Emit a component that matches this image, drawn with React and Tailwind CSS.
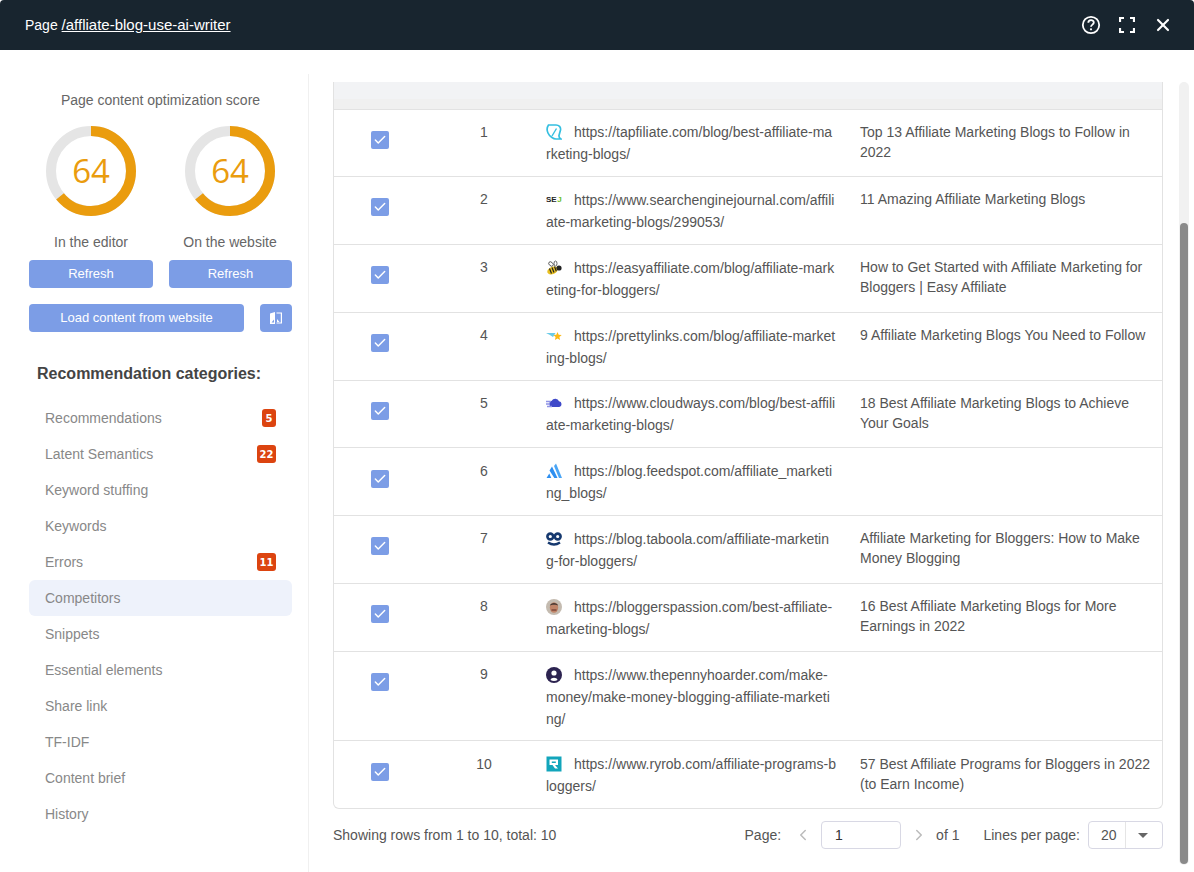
import { Check, ChevronLeft, ChevronRight, X } from 'lucide-react';

const FONT = "font-['Liberation_Sans',Arial,sans-serif]";

const categories = [
  { name: 'Recommendations', badge: 5 },
  { name: 'Latent Semantics', badge: 22 },
  { name: 'Keyword stuffing' },
  { name: 'Keywords' },
  { name: 'Errors', badge: 11 },
  { name: 'Competitors', active: true },
  { name: 'Snippets' },
  { name: 'Essential elements' },
  { name: 'Share link' },
  { name: 'TF-IDF' },
  { name: 'Content brief' },
  { name: 'History' },
];

function TapIcon() {
  return (
    <svg viewBox="0 0 16 16" className="h-4 w-4">
      <path d="M2.500 1h7.500c3 0 5 2 4.500 5L13 11.500c-.2 1.300.5 2.500 1.800 3.500H10C7.500 15 3.500 12.500 2 9 .8 6.500.8 3.500 2.500 1z" fill="none" stroke="#35bfe0" strokeWidth="1.700" />
      <path d="M6 12l4.500-7.500" stroke="#35bfe0" strokeWidth="1.400" />
    </svg>
  );
}

function SejIcon() {
  return (
    <span className="flex h-4 w-4 items-center text-[8px] leading-none font-bold text-[#222]">
      <span>SE</span>
      <span className="ml-[0.5px] text-[#6fbf2a]">J</span>
    </span>
  );
}

function BeeIcon() {
  return (
    <svg viewBox="0 0 16 16" className="h-4 w-4">
      <ellipse cx="5" cy="4" rx="2.600" ry="1.800" fill="none" stroke="#555" strokeWidth="0.900" transform="rotate(40 5 4)" />
      <ellipse cx="9.500" cy="3.500" rx="1.500" ry="2.500" fill="none" stroke="#555" strokeWidth="0.900" />
      <ellipse cx="6.500" cy="10.500" rx="5.500" ry="3.600" fill="#e9c021" transform="rotate(-25 6.500 10.500)" />
      <path d="M3.500 8.500l2 5M6 7.500l2 5M8.500 6.500l1.800 4.800" stroke="#222" strokeWidth="1.200" />
      <circle cx="13" cy="8" r="2.600" fill="#222" />
    </svg>
  );
}

function PrettyIcon() {
  return (
    <svg viewBox="0 0 16 16" className="h-4 w-4">
      <path d="M0 5h9.500L7 9 3.500 6.800z" fill="#69cbe8" />
      <path d="M11.500 4l1.200 2.800 3 .2-2.300 2 .7 3-2.600-1.600L8.900 12l.7-3-2.300-2 3-.2z" fill="#fbb917" />
    </svg>
  );
}

function CloudIcon() {
  return (
    <svg viewBox="0 0 16 16" className="h-4 w-4">
      <path d="M5.500 12a3.200 3.200 0 0 1 .2-6.200A4 4 0 0 1 13 6.300a2.900 2.900 0 0 1 .3 5.700z" fill="#3f49c9" />
      <path d="M0 6.500h5M0 9h4M1 11.500h5" stroke="#8f93e6" strokeWidth="1.300" />
    </svg>
  );
}

function FeedIcon() {
  return (
    <svg viewBox="0 0 16 16" className="h-4 w-4">
      <path d="M.500 15l2.800-4.500 2 4.500zM3.500 7.500L6 3.500 11.500 15H8.300z" fill="#2e8ff0" />
      <path d="M8 3l2-2.500L16 15h-3z" fill="#4aa5f5" />
    </svg>
  );
}

function TaboolaIcon() {
  return (
    <svg viewBox="0 0 16 16" className="h-4 w-4">
      <circle cx="4.300" cy="5.500" r="2.900" fill="none" stroke="#16396f" strokeWidth="2.600" />
      <circle cx="11.700" cy="5.500" r="2.900" fill="none" stroke="#16396f" strokeWidth="2.600" />
      <path d="M2 11.500c3.800 2.500 8.200 2.500 12 0" fill="none" stroke="#16396f" strokeWidth="2.400" />
    </svg>
  );
}

function FaceIcon() {
  return (
    <svg viewBox="0 0 16 16" className="h-4 w-4">
      <circle cx="8" cy="8" r="8" fill="#c4bbb0" />
      <ellipse cx="8" cy="8.500" rx="4.200" ry="5.200" fill="#c08468" />
      <path d="M3.800 6.500c1-3.500 7.400-3.500 8.400 0-2-1-6.400-1-8.400 0z" fill="#4a3a33" />
      <path d="M5.500 11h5" stroke="#6d3a2e" strokeWidth="1.200" />
    </svg>
  );
}

function HoarderIcon() {
  return (
    <svg viewBox="0 0 16 16" className="h-4 w-4">
      <circle cx="8" cy="8" r="8" fill="#2c2350" />
      <circle cx="8" cy="6" r="2.600" fill="#fff" />
      <path d="M4.500 13c.5-3 6.500-3 7 0-2 1.300-5 1.300-7 0z" fill="#fff" />
    </svg>
  );
}

function RyrobIcon() {
  return (
    <svg viewBox="0 0 16 16" className="h-4 w-4">
      <rect width="15" height="15" x="0.500" y="0.500" fill="#12a5bb" />
      <path d="M3.500 3.500h8.500v5.500H9l3 3.500H9L6.500 9H3.500z" fill="#fff" />
      <rect x="5.800" y="5.500" width="4" height="1.500" fill="#12a5bb" />
    </svg>
  );
}

const rows = [
  { url: 'https://tapfiliate.com/blog/best-affiliate-marketing-blogs/', title: 'Top 13 Affiliate Marketing Blogs to Follow in 2022', Icon: TapIcon },
  { url: 'https://www.searchenginejournal.com/affiliate-marketing-blogs/299053/', title: '11 Amazing Affiliate Marketing Blogs', Icon: SejIcon },
  { url: 'https://easyaffiliate.com/blog/affiliate-marketing-for-bloggers/', title: 'How to Get Started with Affiliate Marketing for Bloggers | Easy Affiliate', Icon: BeeIcon },
  { url: 'https://prettylinks.com/blog/affiliate-marketing-blogs/', title: '9 Affiliate Marketing Blogs You Need to Follow', Icon: PrettyIcon },
  { url: 'https://www.cloudways.com/blog/best-affiliate-marketing-blogs/', title: '18 Best Affiliate Marketing Blogs to Achieve Your Goals', Icon: CloudIcon },
  { url: 'https://blog.feedspot.com/affiliate_marketing_blogs/', title: '', Icon: FeedIcon },
  { url: 'https://blog.taboola.com/affiliate-marketing-for-bloggers/', title: 'Affiliate Marketing for Bloggers: How to Make Money Blogging', Icon: TaboolaIcon },
  { url: 'https://bloggerspassion.com/best-affiliate-marketing-blogs/', title: '16 Best Affiliate Marketing Blogs for More Earnings in 2022', Icon: FaceIcon },
  { url: 'https://www.thepennyhoarder.com/make-money/make-money-blogging-affiliate-marketing/', title: '', Icon: HoarderIcon },
  { url: 'https://www.ryrob.com/affiliate-programs-bloggers/', title: '57 Best Affiliate Programs for Bloggers in 2022 (to Earn Income)', Icon: RyrobIcon },
];

function Donut() {
  return (
    <div className="relative h-[90px] w-[90px]">
      <svg viewBox="0 0 90 90" className="h-[90px] w-[90px] -rotate-90">
        <circle cx="45" cy="45" r="40" fill="none" stroke="#e5e5e5" strokeWidth="10" />
        <circle cx="45" cy="45" r="40" fill="none" stroke="#ea9c0e" strokeWidth="10" strokeDasharray="160.8 251.3" />
      </svg>
      <span className="absolute inset-0 flex items-center justify-center font-['Open_Sans',sans-serif] text-[33px] text-[#ea9c0e]">64</span>
    </div>
  );
}

function Badge({ value }) {
  return (
    <span className="flex h-[18px] min-w-[14px] items-center justify-center rounded-[3px] bg-[#dc4410] px-[2.5px] font-['DejaVu_Sans',sans-serif] text-[10px] font-bold text-white">
      {value}
    </span>
  );
}

function Row({ row, n }) {
  const { Icon } = row;
  return (
    <div className="grid grid-cols-[92px_116px_318px_1fr] border-b border-[#e2e2e2] last:border-b-0">
      <div className="flex justify-center pt-[21.2px]">
        <span className="flex h-[18px] w-[18px] items-center justify-center rounded-[2px] bg-[#7c9de6]">
          <Check size={14} strokeWidth={2.5} className="text-white" />
        </span>
      </div>
      <div className="pt-[12.2px] text-center text-[14px] leading-[20px] text-[#555]">{n}</div>
      <div className="pt-[11.9px] pr-[23.5px] pb-[10.9px] pl-[4px] text-[14px] leading-[22px] break-all text-[#555]">
        <span className="mr-[12px] inline-block h-4 w-4 overflow-hidden align-[-3px]"><Icon /></span>
        {row.url}
      </div>
      <div className="pt-[12.2px] pr-[10px] pb-[10px] text-[14px] leading-[20px] text-[#555]">{row.title}</div>
    </div>
  );
}

export default function App() {
  return (
    <div className={`flex h-[872px] flex-col overflow-hidden bg-white ${FONT}`}>
      <header className="flex h-[50px] shrink-0 items-center justify-between rounded-t-[4px] bg-[#18252f] pr-[21px] pl-[25px] text-white">
        <div className="text-[14px]">
          Page <a className="text-[15px] underline">/affliate-blog-use-ai-writer</a>
        </div>
        <div className="flex items-center gap-[18px]">
          <svg viewBox="0 0 20 20" className="h-[20px] w-[20px]" fill="none" stroke="#fff">
            <circle cx="10" cy="10" r="8.200" strokeWidth="1.800" />
            <path d="M7.300 7.800c0-3.400 5.500-3.400 5.500-.2 0 2-2.800 2.100-2.800 4.200" strokeWidth="1.800" />
            <circle cx="10" cy="14.300" r="1.100" fill="#fff" stroke="none" />
          </svg>
          <svg viewBox="0 0 16 16" className="h-[16px] w-[16px]" fill="none" stroke="#fff" strokeWidth="2.200">
            <path d="M1 5V1h4M11 1h4v4M15 11v4h-4M5 15H1v-4" />
          </svg>
          <X size={20} strokeWidth={2.6} />
        </div>
      </header>

      <div className="flex min-h-0 flex-1">
        <aside className="mt-[24px] w-[309px] shrink-0 border-r border-[#f0f0f0] pr-[16px] pl-[29px]">
          <div className="pt-[18px] text-center text-[14px] leading-[16px] text-[#666]">Page content optimization score</div>
          <div className="mt-[18px] flex">
            <div className="flex w-[124px] flex-col items-center">
              <Donut />
              <div className="mt-[18px] text-[14px] leading-[16px] text-[#666]">In the editor</div>
            </div>
            <div className="ml-[16px] flex w-[122px] flex-col items-center">
              <Donut />
              <div className="mt-[18px] text-[14px] leading-[16px] text-[#666]">On the website</div>
            </div>
          </div>
          <div className="mt-[10px] flex gap-[16px]">
            <button className="h-[28px] w-[124px] rounded-[4px] bg-[#7c9de6] text-[13px] text-white">Refresh</button>
            <button className="h-[28px] w-[123px] rounded-[4px] bg-[#7c9de6] text-[13px] text-white">Refresh</button>
          </div>
          <div className="mt-[16px] flex gap-[16px]">
            <button className="h-[28px] w-[215px] rounded-[4px] bg-[#7c9de6] text-[13px] text-white">Load content from website</button>
            <button className="flex h-[28px] w-[32px] items-center justify-center rounded-[4px] bg-[#7c9de6]">
              <svg viewBox="0 0 14 14" className="h-[14px] w-[14px]">
                <path d="M1 2.500L6 1v12H1zM2.500 11.500H5V8.500z" fill="#fff" fillRule="evenodd" />
                <path d="M7.500 1.500H13v11H7.500V11.500h4.300v-9H7.500zM8 8l2.500 3H8z" fill="#fff" />
              </svg>
            </button>
          </div>
          <h2 className="mt-[32px] pl-[8px] text-[16px] leading-[20px] font-bold text-[#444]">Recommendation categories:</h2>
          <ul className="mt-[16px]">
            {categories.map((c) => (
              <li
                key={c.name}
                className={`flex h-[36px] items-center justify-between rounded-[6px] pr-[16px] pl-[16px] text-[14px] text-[#888] ${c.active ? 'bg-[#eef2fb]' : ''}`}
              >
                {c.name}
                {c.badge && <Badge value={c.badge} />}
              </li>
            ))}
          </ul>
        </aside>

        <main className="flex min-w-0 flex-1 pt-[32px] pl-[24px]">
          <div className="w-[830px] shrink-0">
            <div className="overflow-hidden rounded-b-[6px] border border-t-0 border-[#e2e2e2]">
              <div className="h-[28px] border-b border-[#e2e2e2] bg-[linear-gradient(#f2f3f5_62%,#f0f0f0_62%)]" />
              <div className="-mt-[0.6px]">
                {rows.map((row, i) => (
                  <Row key={row.url} row={row} n={i + 1} />
                ))}
              </div>
            </div>
            <div className="mt-[12px] flex h-[28px] items-center text-[14px] text-[#555]">
              <span>Showing rows from 1 to 10, total: 10</span>
              <span className="ml-auto">Page:</span>
              <ChevronLeft size={18} className="ml-[13px] text-[#bbb]" />
              <div className="ml-[9px] flex h-[28px] w-[80px] items-center rounded-[4px] border border-[#d8d8e4] pl-[13px] text-[#333]">1</div>
              <ChevronRight size={18} className="ml-[9px] text-[#bbb]" />
              <span className="ml-[8px]">of 1</span>
              <span className="ml-[24px]">Lines per page:</span>
              <div className="ml-[8px] flex h-[28px] w-[75px] items-center rounded-[4px] border border-[#d8d8e4]">
                <span className="w-[37px] border-r border-[#e5e5e5] pl-[12px] leading-[26px]">20</span>
                <span className="ml-[12px] h-0 w-0 border-x-[5px] border-t-[5px] border-x-transparent border-t-[#666]" />
              </div>
            </div>
          </div>
          <div className="ml-[16px] h-[783px] w-[10px] shrink-0 rounded-[5px] bg-[#f1f1f1] px-[1px] pt-[141px]">
            <div className="h-[641px] rounded-[4px] bg-[#8a8a8a]" />
          </div>
        </main>
      </div>
    </div>
  );
}
